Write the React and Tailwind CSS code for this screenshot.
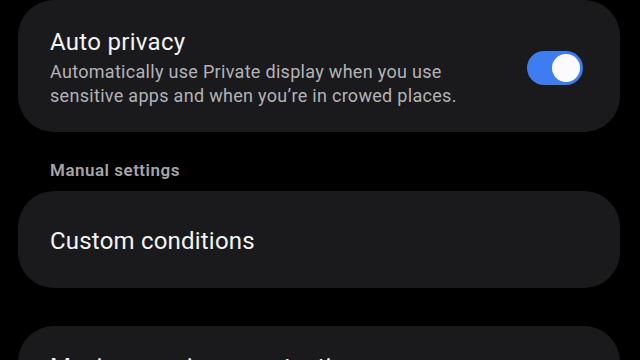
const font = { fontFamily: "Roboto, 'Noto Sans', sans-serif" };

function Toggle({ on }) {
  return (
    <div className={`flex h-[34px] w-[56px] shrink-0 items-center rounded-full px-[3px] ${on ? "justify-end bg-[#3d7cf1]" : "justify-start bg-[#5a5a5e]"}`}>
      <div className="h-[28px] w-[28px] rounded-full bg-[#fbfbfd]" />
    </div>
  );
}

export default function App() {
  return (
    <div className="h-[360px] w-[640px] overflow-hidden bg-black" style={font}>
      <div className="ml-[18px] w-[602px]">
        <div className="flex items-center rounded-[36px] bg-[#1a1a1c] pb-[24px] pl-[32px] pr-[37px] pt-[28px]">
          <div className="flex-1">
            <div className="text-[24px] leading-[28px] tracking-[0.3px] text-[#f3f3f5]">Auto privacy</div>
            <p className="mt-[4px] w-[440px] text-[18px] leading-[24px] tracking-[0.3px] text-[#b3b3b7]">
              Automatically use Private display when you use sensitive apps and when you’re in crowed places.
            </p>
          </div>
          <Toggle on />
        </div>

        <div className="mt-[28px] pl-[32px] text-[17px] font-semibold leading-[20px] tracking-[0.5px] text-[#a5a5a9]">
          Manual settings
        </div>

        <div className="mt-[11px] flex h-[97px] items-center rounded-[36px] bg-[#1a1a1c] pl-[32px] pt-[3px]">
          <div className="text-[24px] leading-[28px] tracking-[0.2px] text-[#f3f3f5]">Custom conditions</div>
        </div>

        <div className="mt-[38px] flex h-[97px] items-start rounded-[36px] bg-[#1a1a1c] pl-[32px] pt-[27px]">
          <div className="text-[24px] leading-[28px] tracking-[0.2px] text-[#f3f3f5]">Maximum privacy protection</div>
        </div>
      </div>
    </div>
  );
}
